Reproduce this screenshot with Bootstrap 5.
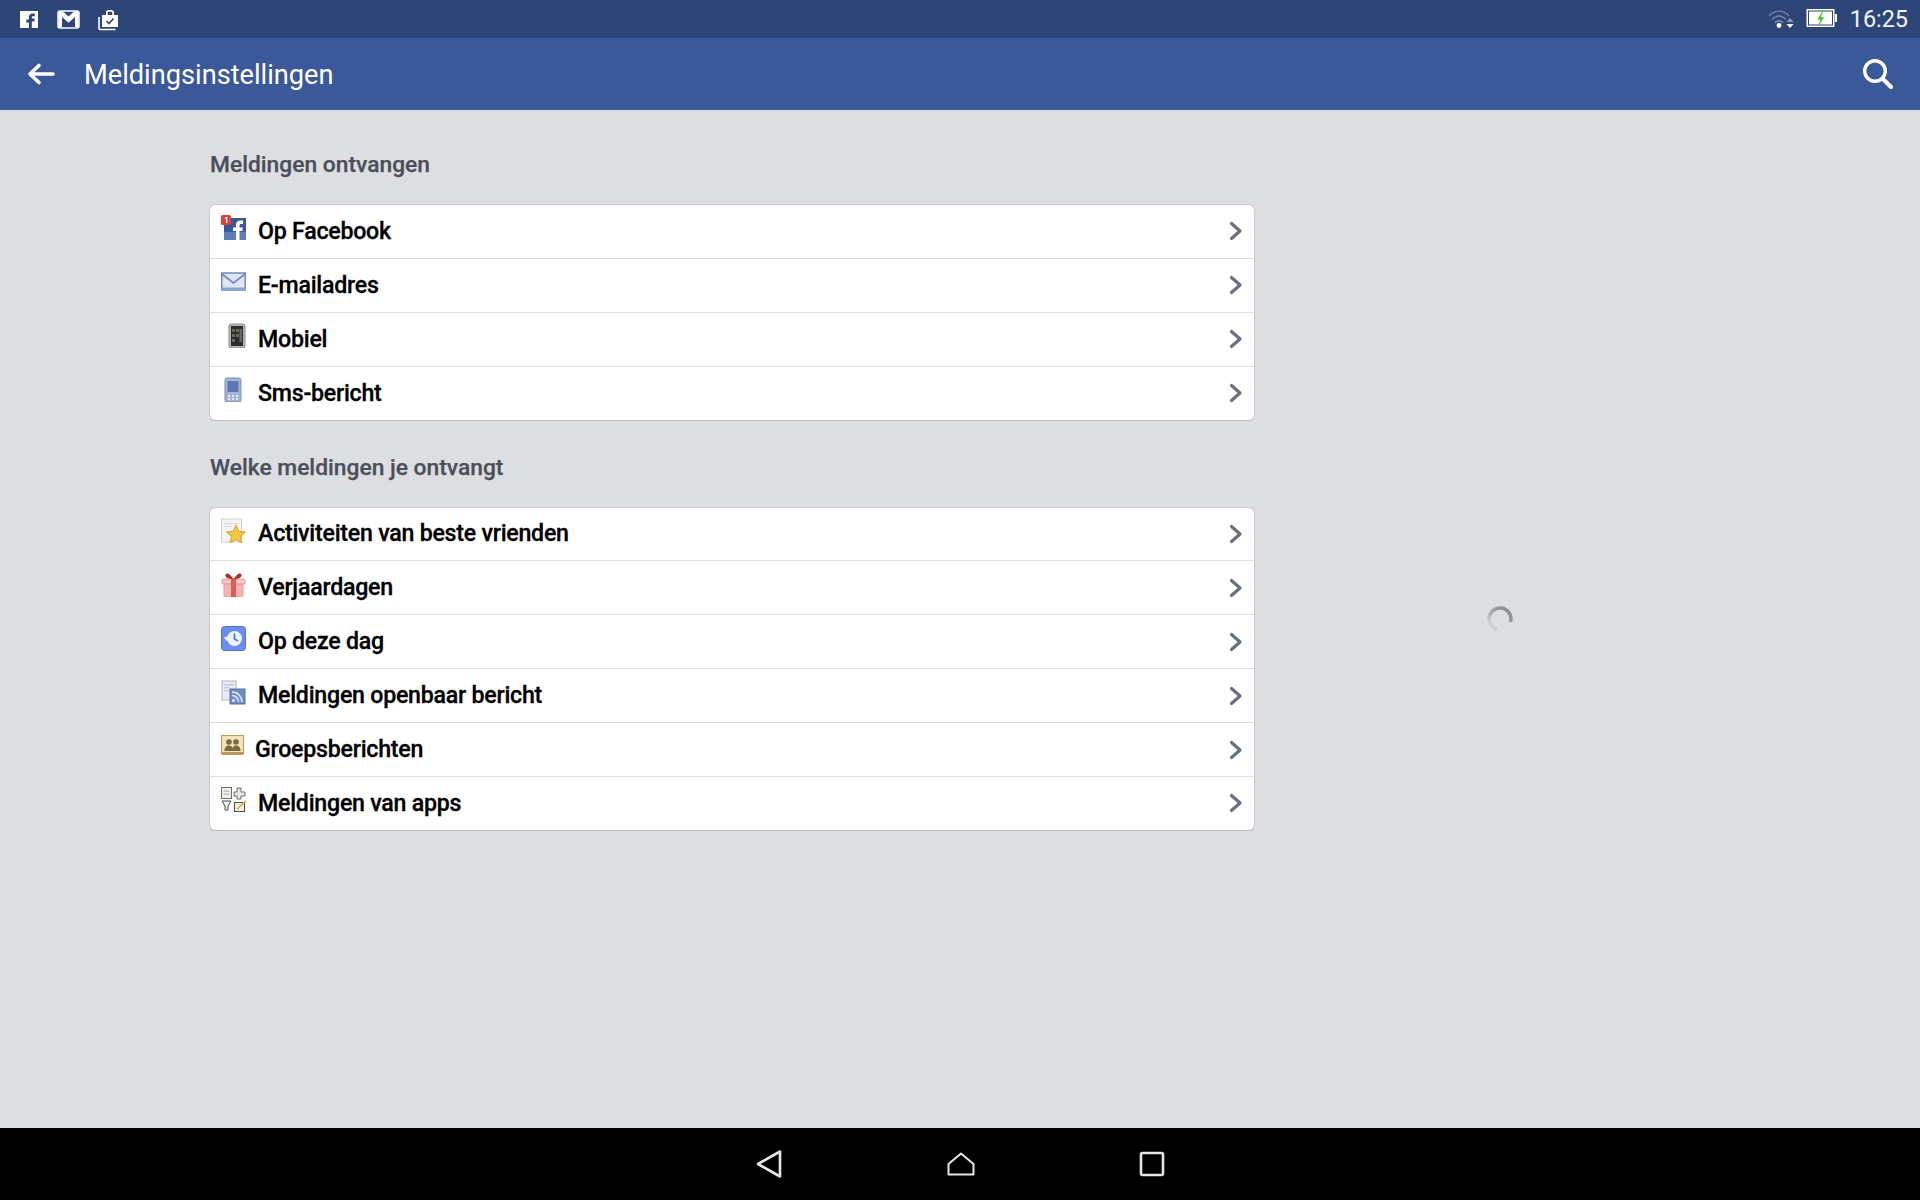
<!DOCTYPE html>
<html lang="nl">
  <head>
    <meta charset="UTF-8" />
    <meta name="viewport" content="width=device-width, initial-scale=1.0" />
    <title>Meldingsinstellingen</title>
    <link
      href="https://cdn.jsdelivr.net/npm/bootstrap@5.3.0/dist/css/bootstrap.min.css"
      rel="stylesheet"
    />
    <style>
      html, body {
        height: 100%;
      }
      body {
        font-family: Roboto, "Liberation Sans", sans-serif;
        background-color: #dddee1;
        overflow: hidden;
      }
      .screen {
        height: 1200px;
      }
      .status-bar {
        height: 38px;
        background-color: #2e4577;
        padding: 0 12px 0 19px;
        flex: none;
      }
      .status-left {
        gap: 18px;
      }
      .status-time {
        font-size: 23.4px;
        color: #f2f4f8;
        line-height: 38px;
        margin-left: 13px;
      }
      .wifi-icon {
        margin-right: 12px;
      }
      .app-bar {
        height: 72px;
        background-color: #3b5898;
        padding: 0 27px 0 27px;
        flex: none;
      }
      .app-title {
        font-size: 27.2px;
        font-weight: 400;
        color: #fff;
        margin: 2px 0 0 29px;
        line-height: 70px;
      }
      .content {
        width: 1046px;
        margin-left: 209px;
        padding-top: 35px;
      }
      .section-title {
        font-size: 22.8px;
        font-weight: 500;
        color: #4b4f5a;
        line-height: 40px;
        margin: 0 0 19px 1px;
        -webkit-text-stroke: 0.25px #4b4f5a;
      }
      .settings-list {
        border: 1px solid #c9cbd0;
        border-bottom-color: #b8bbc2;
        border-radius: 6px;
        margin-bottom: 27px;
      }
      .settings-row {
        height: 53.9px;
        padding: 0 11px 0 11px;
        background: #fff;
        border-width: 0 0 1px;
        border-color: #dddee1;
        font-size: 23.2px;
        font-weight: 500;
        color: #000;
      }
      .settings-row:last-child {
        height: 52.9px;
        border-bottom-width: 0;
      }
      .row-icon {
        width: 25px;
        height: 25px;
        margin-right: 12px;
        margin-top: -7px;
        flex: none;
      }
      .row-label {
        flex: 1;
        line-height: 1;
        letter-spacing: -0.25px;
        -webkit-text-stroke: 0.3px #000;
      }
      .label-tight {
        margin-left: -3px;
      }
      .row-chevron {
        width: 14px;
        height: 20px;
        flex: none;
      }
      .spinner-place {
        top: 605px;
        left: 1486px;
        position: absolute;
      }
      .nav-bar {
        height: 72px;
        background-color: #000;
        gap: 164px;
        flex: none;
      }
    </style>
  </head>
  <body>
    <div class="screen d-flex flex-column">
      <div class="status-bar d-flex align-items-center">
        <div class="status-left d-flex align-items-center flex-grow-1">
          <svg width="20" height="19" viewBox="0 0 20 19">
            <path fill="#fff" d="M1 1h18v17h-6.200v-6.600h2.500l.4-2.900h-2.900V7.700c0-.9.3-1.400 1.400-1.400h1.600V3.700c-.4 0-1.200-.1-2.200-.1-2.200 0-3.700 1.300-3.700 3.800v2.100H7.300v2.900h2.600V18H1z"/>
          </svg>
          <svg width="23" height="19" viewBox="0 0 23 19">
            <rect x="1" y="1" width="21" height="17" rx="2" fill="none" stroke="#fff" stroke-width="1.500"/>
            <path fill="#fff" d="M1.500 1.500h4.500l5.500 5 5.500-5h4.500V17h-3.500V7l-6.500 5.800L5 7v10H1.500z"/>
          </svg>
          <svg width="21" height="23" viewBox="2 0 21 23">
            <path fill="#fff" d="M6 7h16v12H6zM10 7V4.500C10 3 11 2 12.500 2h3C17 2 18 3 18 4.500V7h-1.700V4.500c0-.5-.4-.8-.8-.8h-3c-.5 0-.8.3-.8.800V7z"/>
            <path fill="none" stroke="#2e4577" stroke-width="1.600" d="M10.500 13l2.500 2.500 4.500-5"/>
            <path fill="none" stroke="#fff" stroke-width="1.600" d="M3 9v11.500a1 1 0 0 0 1 1h15.500"/>
          </svg>
        </div>
        <svg class="wifi-icon" width="26" height="22" viewBox="0 0 26 22">
          <path fill="none" stroke="#fff" stroke-opacity=".35" stroke-width="1.400" d="M1 8c6-6.500 14-6.500 20 0M4 11.500c4.500-4.500 9.500-4.500 14 0"/>
          <path fill="none" stroke="#fff" stroke-opacity=".55" stroke-width="1.400" d="M7 14.500c2.500-2 5.500-2 8 0"/>
          <circle cx="11" cy="17.500" r="2.400" fill="#fff"/>
          <path fill="#8d9ab6" d="M22 10l3.500 4h-7z"/>
          <path fill="#fff" d="M18.500 16h7L22 20z"/>
        </svg>
        <svg width="31" height="22" viewBox="0 0 31 22">
          <rect x="1" y="1.500" width="27" height="17" fill="#fff" stroke="#fff" stroke-width="1"/>
          <rect x="2.500" y="3" width="24" height="14" fill="#fff" stroke="#2e4577" stroke-width="1"/>
          <rect x="29" y="6" width="2" height="8" fill="#fff"/>
          <path fill="#3fbf12" d="M17 2l-5.500 9.500h3L12 19l6-9.800h-3.200L17.500 2z"/>
        </svg>
        <span class="status-time">16:25</span>
      </div>

      <div class="app-bar d-flex align-items-center">
        <svg width="28" height="24" viewBox="0 0 28 24">
          <path fill="none" stroke="#fff" stroke-width="3.600" stroke-linecap="round" stroke-linejoin="round" d="M12 3.500L3 12l9 8.500M3.500 12H26"/>
        </svg>
        <h1 class="app-title flex-grow-1">Meldingsinstellingen</h1>
        <svg width="30" height="30" viewBox="0 0 30 30">
          <circle cx="12" cy="12" r="10.300" fill="none" stroke="#fff" stroke-width="3.400"/>
          <path stroke="#fff" stroke-width="4" stroke-linecap="round" d="M20 20l8 8"/>
        </svg>
      </div>

      <main class="flex-grow-1">
        <div class="content">
          <h2 class="section-title">Meldingen ontvangen</h2>
          <div class="settings-list list-group" id="delivery-list"></div>

          <h2 class="section-title">Welke meldingen je ontvangt</h2>
          <div class="settings-list list-group" id="types-list"></div>
        </div>
        <svg class="spinner-place" width="28" height="28" viewBox="0 0 28 28">
          <defs>
            <linearGradient id="spin-fade" x1="0" y1="1" x2="1" y2="0">
              <stop offset="0" stop-color="#dddee1"/>
              <stop offset="0.6" stop-color="#9a9da3"/>
              <stop offset="1" stop-color="#85888e"/>
            </linearGradient>
          </defs>
          <path fill="none" stroke="url(#spin-fade)" stroke-width="3.500" d="M24.500 17A11 11 0 0 0 14 3 11 11 0 0 0 3 14a11 11 0 0 0 8 10.500"/>
        </svg>
      </main>

      <div class="nav-bar d-flex justify-content-center align-items-center">
        <svg width="28" height="30" viewBox="0 0 28 30">
          <path fill="none" stroke="#e6e6e6" stroke-width="2.600" stroke-linejoin="round" d="M25 2.500v25L3 15z"/>
        </svg>
        <svg width="28" height="24" viewBox="0 0 28 24">
          <path fill="none" stroke="#e6e6e6" stroke-width="2" stroke-linejoin="round" d="M1.500 12L14 1.500 26.500 12v10.500h-25z"/>
        </svg>
        <svg width="26" height="26" viewBox="0 0 26 26">
          <rect x="2" y="2" width="22" height="22" rx="1.500" fill="none" stroke="#e6e6e6" stroke-width="2.600"/>
        </svg>
      </div>
    </div>

    <script>
      const icons = {
        facebook:
          '<rect x="3" y="3" width="22" height="22" fill="#3b5998"/><rect x="3" y="17" width="22" height="8" fill="#5f7db8"/><path fill="#fff" d="M15 25v-9h-3v-3.500h3v-2.500c0-3 1.800-4.500 4.300-4.500h2.700v3.400h-1.800c-1.200 0-1.700.6-1.700 1.700v1.900h3.300l-.5 3.500h-2.800v9z"/><rect x="0" y="0" width="10" height="10" rx="1.500" fill="#d9433b"/><path fill="#fff" d="M5 2h1.300v6H5V3.500L3.800 4V3z"/>',
        mail:
          '<rect x="0.750" y="4" width="23.500" height="17" fill="#dfe5f4" stroke="#6f88c2" stroke-width="1.500"/><path fill="none" stroke="#6f88c2" stroke-width="1.600" d="M1 5l11.500 9L24 5"/><rect x="0.500" y="18.500" width="24" height="2.500" fill="#8ea3d0"/>',
        phone:
          '<rect x="8" y="1" width="16" height="24" rx="2" fill="#b4b6ba" stroke="#8d8f93"/><rect x="10" y="3" width="12" height="20" fill="#2c2c2c"/><path fill="#6d6a5c" d="M11 6h3v3h-3zM15 6h3v3h-3zM11 11h3v3h-3zM15 11h3v3h-3zM11 16h3v3h-3zM18.500 6H21v13h-2.500z"/>',
        sms:
          '<rect x="4" y="1" width="16" height="24" rx="2" fill="#a6b4d6" stroke="#7c8db8"/><rect x="6.500" y="4" width="11" height="11" fill="#5f78b4"/><path fill="#e6ebf6" d="M7 18h2v2H7zM11 18h2v2h-2zM15 18h2v2h-2zM7 21h2v2H7zM11 21h2v2h-2zM15 21h2v2h-2z"/>',
        star:
          '<rect x="0.500" y="1" width="20" height="23" fill="#f4f4f0" stroke="#cfcfca"/><path fill="#d8d8d2" d="M3 5h14v1H3zM3 8h8v1H3z"/><path fill="#f3c73f" stroke="#c9962a" stroke-width=".8" d="M15 7l2.800 6.300 6.700.6-5 4.500 1.500 6.600-6-3.500-6 3.500 1.500-6.600-5-4.500 6.700-.6z"/>',
        gift:
          '<rect x="3" y="9" width="19" height="16" rx="2" fill="#f4b4b2" stroke="#e29a98"/><rect x="1" y="7" width="23" height="5" rx="1.500" fill="#f6c8c6" stroke="#dd9492"/><rect x="10" y="7" width="5" height="18" fill="#d5605d"/><path fill="#a92f2d" d="M12.500 7C9 2 6 0 4.500 2.500 3.500 5 7 7 12.500 7zM12.500 7C16 2 19 0 20.500 2.500 21.500 5 18 7 12.500 7z"/>',
        history:
          '<rect x="0.500" y="0.500" width="24" height="24" rx="3" fill="#6d8cf0" stroke="#5573d6"/><circle cx="13.500" cy="12.500" r="7.500" fill="#eef2fe"/><path fill="none" stroke="#5573d6" stroke-width="1.800" d="M13.500 7.500v5.500l3.500 2"/><path fill="#eef2fe" d="M2.500 11l6 0-3 4z"/>',
        feed:
          '<rect x="1" y="1" width="14" height="19" fill="#e9ecf2" stroke="#aeb6c6"/><path fill="#c2c9d8" d="M3 4h10v1.500H3zM3 7h5v1.500H3zM3 10h5v1.500H3z"/><rect x="9" y="9" width="15" height="15" fill="#6f8bc4" stroke="#58729f"/><circle cx="12.500" cy="20.500" r="1.500" fill="#e4eaf6"/><path fill="none" stroke="#e4eaf6" stroke-width="1.500" d="M11 15.500a6.500 6.500 0 0 1 6.500 6.500M11 12a10 10 0 0 1 10 10"/>',
        groups:
          '<rect x="0.500" y="1.500" width="22" height="18" fill="#f4e3b8" stroke="#b89a60"/><rect x="0.500" y="18" width="22" height="3" fill="#b89a60"/><circle cx="8" cy="8" r="2.800" fill="#7d6a3e"/><circle cx="15" cy="8" r="2.800" fill="#7d6a3e"/><path fill="#7d6a3e" d="M3.500 17c0-4 2-5.500 4.500-5.500s4 1.500 4 5.500zM11.500 17c0-4 1-5.500 3.500-5.500s4.500 1.500 4.500 5.500z"/>',
        apps:
          '<rect x="0.500" y="0.500" width="10" height="11" fill="#f0f0ea" stroke="#6f6f6a"/><path fill="#b9b9b0" d="M2.500 3.500h6v1.200h-6zM2.500 6.500h6v1.200h-6z"/><path fill="#e8e8e4" stroke="#6f6f6a" d="M16 1h4v4h4v4h-4v3h-4V9h-3V5h3z"/><path fill="#f0f0ea" stroke="#4f4f4a" d="M1 14h9l-3 5v4H4v-4z"/><rect x="13.500" y="15.500" width="10" height="9" fill="#f0f0ea" stroke="#4f4f4a"/><path fill="#e0a820" d="M24.500 13l-8 8-1 1.500 2-.5 8-8z"/>',
      };

      const deliveryRows = [
        ["facebook", "Op Facebook"],
        ["mail", "E-mailadres"],
        ["phone", "Mobiel"],
        ["sms", "Sms-bericht"],
      ];
      const typeRows = [
        ["star", "Activiteiten van beste vrienden"],
        ["gift", "Verjaardagen"],
        ["history", "Op deze dag"],
        ["feed", "Meldingen openbaar bericht"],
        ["groups", "Groepsberichten", true],
        ["apps", "Meldingen van apps"],
      ];

      function renderRows(target, rows) {
        document.getElementById(target).innerHTML = rows
          .map(function (row) {
            return (
              '<div class="settings-row list-group-item d-flex align-items-center">' +
              '<svg class="row-icon" viewBox="0 0 25 25">' + icons[row[0]] + "</svg>" +
              '<span class="row-label' + (row[2] ? " label-tight" : "") + '">' + row[1] + "</span>" +
              '<svg class="row-chevron" viewBox="0 0 14 20"><path fill="none" stroke="#687080" stroke-width="3.200" stroke-linecap="round" stroke-linejoin="round" d="M2.500 2.500L11 10l-8.500 7.500"/></svg>' +
              "</div>"
            );
          })
          .join("");
      }

      renderRows("delivery-list", deliveryRows);
      renderRows("types-list", typeRows);
    </script>
    <script src="https://cdn.jsdelivr.net/npm/bootstrap@5.3.0/dist/js/bootstrap.bundle.min.js"></script>
  </body>
</html>
